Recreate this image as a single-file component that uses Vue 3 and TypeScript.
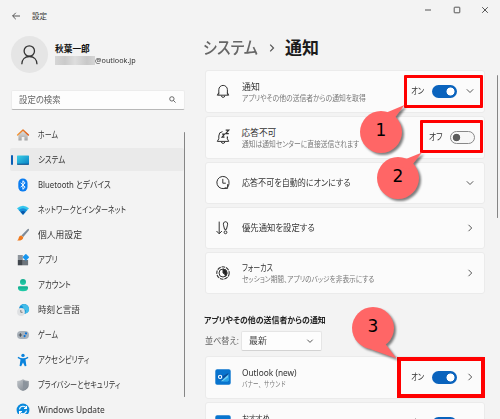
<script setup lang="ts">
interface NavItem { id: string; label: string; width: number }
interface Card {
  id: string
  title: string
  width: number
  sub?: string
  subWidth?: number
  toggle?: 'on' | 'off'
  toggleLabel?: string
  arrow?: 'down' | 'right'
}

const nav: NavItem[] = [
  { id: 'home', label: 'ホーム', width: 20 },
  { id: 'system', label: 'システム', width: 27.5 },
  { id: 'bluetooth', label: 'Bluetooth とデバイス', width: 73 },
  { id: 'network', label: 'ネットワークとインターネット', width: 88 },
  { id: 'personal', label: '個人用設定', width: 43.5 },
  { id: 'apps', label: 'アプリ', width: 19.5 },
  { id: 'account', label: 'アカウント', width: 32.5 },
  { id: 'time', label: '時刻と言語', width: 41.5 },
  { id: 'game', label: 'ゲーム', width: 20 },
  { id: 'access', label: 'アクセシビリティ', width: 51.5 },
  { id: 'privacy', label: 'プライバシーとセキュリティ', width: 82 },
  { id: 'update', label: 'Windows Update', width: 66.5 },
]

const cards: Card[] = [
  { id: 'bell', title: '通知', width: 17.5, sub: 'アプリやその他の送信者からの通知を取得', subWidth: 123.5, toggle: 'on', toggleLabel: 'オン', arrow: 'down' },
  { id: 'snooze', title: '応答不可', width: 35, sub: '通知は通知センターに直接送信されます', subWidth: 117, toggle: 'off', toggleLabel: 'オフ' },
  { id: 'clock', title: '応答不可を自動的にオンにする', width: 108.5, arrow: 'down' },
  { id: 'priority', title: '優先通知を設定する', width: 73, arrow: 'right' },
  { id: 'focus', title: 'フォーカス', width: 30.5, sub: 'セッション期間、アプリのバッジを非表示にする', subWidth: 132.5, arrow: 'right' },
]

const senders: Card[] = [
  { id: 'outlook', title: 'Outlook (new)', width: 54.5, sub: 'バナー、サウンド', subWidth: 44, toggle: 'on', toggleLabel: 'オン', arrow: 'right' },
  { id: 'suggest', title: 'おすすめ', width: 28, sub: 'バナー、サウンド', subWidth: 44, toggle: 'on', toggleLabel: 'オン', arrow: 'right' },
]

const callouts = [
  { n: 1, tail: 'M11 8 L44.5 -6 L31 12Z' },
  { n: 2, tail: 'M14 8 L45 -4.5 L32 12Z' },
  { n: 3, tail: 'M18 42 L44.5 51.5 L32 35Z' },
]

const vFit = {
  mounted(el: HTMLElement, binding: { value: number }) {
    el.style.transform = `scaleX(${binding.value / el.offsetWidth})`
  },
}
</script>

<template>
  <div class="window">
    <aside class="sidebar">
      <header class="titlebar">
        <svg class="back" viewBox="0 0 8 8"><path d="M8 4H.7M3.8.8.6 4l3.2 3.2" /></svg>
        <span v-fit="15" class="t app-name">設定</span>
      </header>

      <div class="profile">
        <div class="avatar">
          <svg viewBox="0 0 37 37"><circle cx="18.3" cy="15" r="5.2" /><path d="M10.8 28.2c0-4.7 3.1-7.7 7.6-7.7s7.6 3 7.6 7.7" /></svg>
        </div>
        <div class="who">
          <span v-fit="35" class="t name">秋葉一郎</span>
          <div class="mail"><i class="smudge"></i><span v-fit="40.5" class="t">@outlook.jp</span></div>
        </div>
      </div>

      <div class="search">
        <span v-fit="41.5" class="t">設定の検索</span>
        <svg viewBox="0 0 8 8"><circle cx="3.3" cy="3.3" r="2.5" /><path d="m5.2 5.2 2.3 2.3" /></svg>
      </div>

      <nav class="nav">
        <div v-for="n in nav" :key="n.id" class="row" :class="{ selected: n.id === 'system' }">
          <svg class="nav-icon" viewBox="0 0 12 12">
            <defs>
              <linearGradient id="gRoof" x1="0" x2="1"><stop stop-color="#f39a3b" /><stop offset="1" stop-color="#dc5a17" /></linearGradient>
              <linearGradient id="gWall" y1="0" x1="0" x2="0" y2="1"><stop stop-color="#e4e4e4" /><stop offset="1" stop-color="#a4a4a4" /></linearGradient>
              <linearGradient id="gScreen" x2="1" y2="1"><stop stop-color="#3ad0e6" /><stop offset="1" stop-color="#087fc4" /></linearGradient>
              <linearGradient id="gTeal" x1="0" x2="0" y2="1"><stop stop-color="#12a98c" /><stop offset="1" stop-color="#23cfaa" /></linearGradient>
              <linearGradient id="gShield" x2="1" y2="1"><stop stop-color="#c4c8cc" /><stop offset="1" stop-color="#747c86" /></linearGradient>
            </defs>
            <template v-if="n.id === 'home'">
              <path d="M1.4 5 6 1.2 10.7 5v6.5H7.4V8H4.7v3.5H1.4z" fill="url(#gWall)" />
              <path d="M.6 6 6 1l5.4 5" fill="none" stroke="url(#gRoof)" stroke-width="1.5" stroke-linecap="round" stroke-linejoin="round" />
            </template>
            <template v-else-if="n.id === 'system'">
              <rect y="1.5" width="12" height="9" rx=".6" fill="url(#gScreen)" />
              <path d="M0 9.8h12v.2q0 .7-.7.7H.7Q0 10.7 0 10z" fill="#0b4a86" />
            </template>
            <template v-else-if="n.id === 'bluetooth'">
              <rect x="1.3" y="-.5" width="9.2" height="13" rx="4.6" fill="#0a7cf0" />
              <path d="m3.6 3.7 4.5 4.5-2.2 2.1V1.700l2.200 2.100-4.500 4.500" fill="none" stroke="#fff" stroke-width=".95" />
            </template>
            <template v-else-if="n.id === 'network'">
              <path d="M0 4.300Q6-.9 12 4.300L6 10.700z" fill="#35c6ee" />
              <path d="M1.700 6.100Q6 2.200 10.300 6.100L6 10.700z" fill="#168dd8" />
              <path d="M3.600 8.100Q6 5.900 8.400 8.100L6 10.700z" fill="#0b55a8" />
            </template>
            <template v-else-if="n.id === 'personal'">
              <path d="M11.800-.1q.6.600 0 1.500L6.300 8 4.400 6.500 10.500.2q.700-.6 1.300-.3z" fill="#7f8b98" />
              <path d="M4.300 6.500 6.300 8.200Q6.200 11.800.2 11.600 1.600 10.300 1.800 8.500 2.300 6.500 4.300 6.500z" fill="#f07a1e" />
            </template>
            <template v-else-if="n.id === 'apps'">
              <path d="M.8 1h5v5h-5z" fill="#8d949b" /><path d="M.8 6h5v5.300h-5z" fill="#41474d" /><path d="M5.900 6h5.200v5.300H5.900z" fill="#6c747b" />
              <rect x="6.400" y=".8" width="4.900" height="4.900" rx=".7" fill="#1796ef" transform="rotate(45 8.850 3.250)" />
            </template>
            <template v-else-if="n.id === 'account'">
              <circle cx="6" cy="2.900" r="3" fill="url(#gTeal)" />
              <path d="M2.300 7.300h7.400q1.400 0 1.400 1.400 0 3.500-5.100 3.500T.9 8.700q0-1.400 1.400-1.400z" fill="url(#gTeal)" />
            </template>
            <template v-else-if="n.id === 'time'">
              <circle cx="7" cy="5" r="5" fill="#1693d6" /><path d="M4 1.500q3 1 2 3.500l3 1.500-1 3q5-1 4-5T7 0z" fill="#43bde9" />
              <circle cx="4" cy="8" r="3.900" fill="#dfe1e3" /><path d="M3.800 6v2.300h1.800" fill="none" stroke="#646a70" stroke-width=".8" />
            </template>
            <template v-else-if="n.id === 'game'">
              <rect y="2" width="12" height="8" rx="3.900" fill="#aab2ba" />
              <path d="M3.400 4.300v3.400M1.700 6h3.400" stroke="#4b535b" stroke-width="1.100" />
              <circle cx="9" cy="4.400" r="1.100" fill="#0a74da" /><circle cx="7.600" cy="7.100" r="1.100" fill="#0a74da" />
            </template>
            <template v-else-if="n.id === 'access'">
              <circle cx="6" cy="1.400" r="1.700" fill="#0a83dc" />
              <path d="M1.200 2.700Q6 6 10.800 2.700l.6 1.300-2.900 1.600.9 6.300-1.600.3L6 8.400 4.200 12.200l-1.600-.3.900-6.300L.6 4z" fill="#0a83dc" />
            </template>
            <template v-else-if="n.id === 'privacy'">
              <path d="M6 .2Q8.500 2 11.800 2v4q0 4-5.800 6Q.2 10 .2 6V2Q3.500 2 6 .2z" fill="url(#gShield)" />
              <path d="M6 1.500Q8.200 2.800 10.500 2.900V6q0 3.200-4.500 4.800z" fill="#8b939c" />
            </template>
            <template v-else>
              <circle cx="6" cy="6" r="6.400" fill="#0989dc" />
              <path d="M2.500 5.400A3.600 3.600 0 0 1 9.300 4.300M9.500 2v2.500H7M9.500 6.600A3.600 3.600 0 0 1 2.700 7.700M2.500 10V7.500H5" fill="none" stroke="#fff" stroke-width="1.050" />
            </template>
          </svg>
          <span v-fit="n.width" class="t">{{ n.label }}</span>
        </div>
      </nav>
      <i class="side-scroll"></i>
    </aside>

    <main class="main">
      <h1 class="crumbs">
        <span v-fit="55" class="t parent">システム</span>
        <svg viewBox="0 0 6 8"><path d="m1.200.7 3.300 3.300-3.300 3.300" /></svg>
        <span v-fit="34" class="t">通知</span>
      </h1>

      <template v-for="(group, g) in [cards, senders]" :key="g">
        <template v-if="g === 1">
          <h2 class="section"><span v-fit="122" class="t">アプリやその他の送信者からの通知</span></h2>
          <div class="sort">
            <span class="sort-label"><span v-fit="33.5" class="t">並べ替え:</span></span>
            <div class="select">
              <span v-fit="17.5" class="t">最新</span>
              <svg viewBox="0 0 8 8"><path d="m1.300 2.700 2.700 2.700 2.700-2.700" /></svg>
            </div>
          </div>
        </template>
        <div class="cards" :class="{ wide: g === 1 }">
          <section v-for="c in group" :key="c.id" class="card" :class="c.id">
            <svg class="card-icon" viewBox="0 0 16 16">
              <path v-if="c.id === 'bell'" d="M3.800 11.800V6.700a4.300 4.300 0 0 1 8.600 0v5.100M2.300 12.200h11.400l-1.300-2.500M2.300 12.200l1.500-2.500M6.400 12.700q.2 1.700 1.700 1.700t1.700-1.700" />
              <g v-else-if="c.id === 'snooze'">
                <path d="M7.500 2.600Q3.800 3 3.800 7v2.800l-1.500 2.600h11.400l-1.300-2.600M6.400 12.900q.2 1.500 1.700 1.500t1.700-1.500" />
                <path d="M10.700 1.100h3.100l-3.100 3.600h3.100M7.100 5.200h2.400L7.100 8.100h2.400M12.400 7.500v2.300" stroke-width="1.200" />
              </g>
              <g v-else-if="c.id === 'clock'"><path d="M11.500 12.800A6.100 6.100 0 1 1 14 8.700q0 2-1.300 3.600M7.800 4.200v4.300h3M12.600 9.500v4.200H9.200" transform="translate(0 -.3)" /></g>
              <g v-else-if="c.id === 'priority'">
                <path d="M4.200 1.600v12M1.500 11l2.700 2.800L6.900 11" />
                <path d="M10.500 1.700q-3 .4-1.800 4.200l.9 3.500h1.800l.9-3.500q1.200-3.800-1.800-4.200z" /><circle cx="10.500" cy="12.300" r="1.400" />
              </g>
              <g v-else-if="c.id === 'focus'">
                <circle cx="8" cy="8" r="6.200" stroke-dasharray="3.600 .9" stroke-width="1.100" /><circle cx="8" cy="8" r="4" /><path d="M8 4a4 4 0 0 1 2.500 7.100Q10 8.700 8 8z" fill="#222" />
              </g>
              <g v-else stroke="none">
                <rect x=".3" y=".3" width="15.400" height="15.400" rx="1.800" fill="#0874ce" />
                <path d="m6 9.600 7.400-4.900v6.800q0 .7-.7.700H6z" fill="#70d0f7" /><path d="m6 8.200 7.400-4.300v1.600L6 12z" fill="#074f9e" />
                <path d="M7.500 12.200 13.400 8v3.500q0 .7-.7.700z" fill="#28a6e9" />
                <rect x="2.300" y="5" width="5.800" height="5.800" rx=".8" fill="#086cc8" /><circle cx="5.100" cy="7.900" r="1.600" fill="none" stroke="#fff" stroke-width="1.100" />
              </g>
            </svg>
            <div class="copy">
              <span v-fit="c.width" class="t title">{{ c.title }}</span>
              <span v-if="c.sub" v-fit="c.subWidth" class="t sub">{{ c.sub }}</span>
            </div>
            <div v-if="c.toggle" class="control">
              <span v-fit="13.5" class="t">{{ c.toggleLabel }}</span>
              <i class="toggle" :class="c.toggle"></i>
            </div>
            <svg v-if="c.arrow" class="arrow" viewBox="0 0 8 8">
              <path :d="c.arrow === 'down' ? 'm.8 2.300 3.200 3.200 3.200-3.200' : 'M2.500.8 5.700 4 2.500 7.200'" />
            </svg>
          </section>
        </div>
      </template>
    </main>

    <div class="caption-buttons">
      <svg viewBox="0 0 6 6"><path d="M0 3h6" /></svg>
      <svg viewBox="0 0 6 6"><rect x=".2" y=".2" width="5.600" height="5.600" rx=".6" /></svg>
      <svg viewBox="0 0 6 6"><path d="m.2.2 5.600 5.600M5.800.2.2 5.800" /></svg>
    </div>
    <i class="main-scroll"></i>

    <i v-for="m in callouts" :key="`f${m.n}`" class="frame" :class="`frame-${m.n}`"></i>
    <div v-for="m in callouts" :key="m.n" class="callout" :class="`callout-${m.n}`">
      <svg viewBox="0 0 42 42"><circle cx="21" cy="21" r="21" /><path :d="m.tail" /></svg>
      <span>{{ m.n }}</span>
    </div>
  </div>
</template>

<style>
body { margin: 0; overflow: hidden; background: #f3f3f3; }
</style>

<style scoped>
.window {
  position: relative; display: flex; width: 500px; height: 419px; overflow: hidden;
  background: #f3f3f3; color: #333;
  font-family: "Noto Sans", "Noto Sans CJK JP", sans-serif; font-size: 8.7px; line-height: 12px;
}
.t { display: inline-block; flex: none; white-space: nowrap; transform-origin: 0 50%; font-feature-settings: "palt"; }
svg { display: block; flex: none; overflow: visible; fill: none; stroke: #444; stroke-width: .9; }
i { display: block; flex: none; }

.sidebar { position: relative; flex: none; width: 185px; }
.titlebar { display: flex; align-items: center; gap: 12.5px; height: 32px; padding-left: 11.5px; }
.back { width: 8px; height: 8px; }
.app-name { font-size: 7.5px; }
.profile { display: flex; align-items: center; gap: 7px; height: 44px; padding-left: 11px; }
.avatar { width: 37px; height: 37px; border-radius: 50%; background: #e5e5e5; }
.avatar svg { width: 37px; height: 37px; stroke: #333; stroke-width: 1.3; }
.who { display: flex; flex-direction: column; padding-top: 1px; }
.name { align-self: flex-start; color: #111; font-weight: 700; line-height: 11px; }
.mail { display: flex; align-items: center; height: 10px; font-size: 7.5px; line-height: 10px; }
.smudge { width: 40px; height: 9px; background: linear-gradient(90deg, #d6d6d6, #cacaca 25%, #dedede 50%, #c8c8c8 80%, #d5d5d5); filter: blur(.6px); }
.search {
  display: flex; align-items: center; justify-content: space-between; box-sizing: border-box;
  width: 174px; height: 20px; margin: 13.5px 0 0 10.5px; padding: 0 7.5px;
  border: 1px solid #ececec; border-bottom: 1px solid #b8b8b8; border-radius: 2px; background: #fdfdfd; color: #666;
}
.search svg { width: 7px; height: 7px; }
.nav { height: 291.5px; margin-top: 12.7px; overflow: hidden; }
.row { position: relative; display: flex; align-items: center; gap: 9px; height: 25px; padding-left: 17px; }
.row .t { position: relative; }
.nav-icon { position: relative; width: 12px; height: 12px; stroke: none; }
.selected::before { content: ""; position: absolute; inset: 1px 1px 1px 10px; border-radius: 2px; background: #eaeaea; }
.selected::after { content: ""; position: absolute; left: 11px; top: 7.5px; width: 2px; height: 10px; border-radius: 1px; background: #0a5eb5; }
.side-scroll { position: absolute; left: 183.7px; top: 132px; width: 1.3px; height: 265px; border-radius: 1px; background: #858585; }

.main { display: flex; flex-direction: column; flex: none; width: 280px; padding-left: 19.5px; }
.crumbs { display: flex; align-items: center; height: 24px; margin: 35.5px 0 10px -1.5px; font-size: 17px; line-height: 24px; font-weight: 600; color: #1b1b1b; }
.crumbs .parent { color: #666; font-weight: 500; }
.crumbs svg { position: absolute; left: 269px; width: 6px; height: 8px; stroke: #555; stroke-width: 1.2; }
.crumbs > .t:last-child { position: absolute; left: 285px; }
.cards { display: flex; flex-direction: column; gap: 2.5px; }
.card {
  display: flex; align-items: center; box-sizing: border-box; height: 42.5px; padding: 0 10px 0 9px;
  border: 1px solid #ebebeb; border-radius: 3px; background: #fbfbfb;
}
.bell, .snooze { height: 43.5px; }
.card-icon { width: 16px; height: 16px; stroke: #333; stroke-width: 1; }
.copy { display: flex; flex: 1; flex-direction: column; align-items: flex-start; width: 0; padding-top: 2px; margin-left: 11px; }
.title { line-height: 11px; }
.sub { font-size: 7.5px; line-height: 10px; color: #777; }
.wide .sub { font-feature-settings: normal; }
.control { display: flex; align-items: center; justify-content: space-between; width: 46px; margin-right: 8.5px; }
.toggle { box-sizing: border-box; width: 25px; height: 13px; border-radius: 7px; }
.on { background: radial-gradient(circle at 18.5px 6.5px, #fff 3.7px, #0a63bd 4.3px); }
.off { border: 1px solid #888; background: radial-gradient(circle at 5.5px 5.5px, #5b5b5b 3.4px, #f7f7f7 4.1px); }
.snooze .control { width: 46.5px; margin-right: -1.5px; }
.arrow { width: 8px; height: 8px; }
.section { height: 12px; margin: 20px 0 0 -.5px; font-size: 8.5px; line-height: 12px; font-weight: 600; color: #222; }
.sort { display: flex; align-items: center; height: 20px; margin-top: 4.5px; color: #666; }
.sort-label { flex: none; width: 36px; }
.select {
  display: flex; align-items: center; justify-content: space-between; box-sizing: border-box;
  width: 81px; height: 20px; padding: 0 7px; border: 1px solid #e5e5e5; border-bottom-color: #d3d3d3;
  border-radius: 2px; background: #fdfdfd; color: #444;
}
.select svg { width: 8px; height: 8px; }
.wide { margin-top: 5px; }
.wide .card { height: 43.5px; }

.caption-buttons { position: absolute; left: 425px; top: 7px; display: flex; gap: 22.5px; }
.caption-buttons svg { width: 6px; height: 6px; }
.main-scroll { position: absolute; left: 497px; top: 75px; width: 1.4px; height: 143px; border-radius: 1px; background: #858585; }

.frame { position: absolute; box-sizing: border-box; border: 3px solid #f00; border-radius: 1px; }
.frame-1 { left: 404px; top: 75px; width: 79px; height: 33px; }
.frame-2 { left: 420px; top: 120px; width: 63px; height: 33px; }
.frame-3 { left: 397px; top: 357px; width: 88px; height: 41px; border-width: 4px; border-radius: 0; }
.callout { position: absolute; display: flex; align-items: center; justify-content: center; width: 42px; height: 42px; }
.callout svg { position: absolute; width: 42px; height: 42px; fill: #ff6666; stroke: none; filter: drop-shadow(2.5px 2.5px 1.2px rgba(0, 0, 0, .5)); }
.callout span { position: relative; top: -2px; color: #000; font: 17px/20px "DejaVu Sans", sans-serif; }
.callout-1 { left: 360px; top: 111px; }
.callout-2 { left: 377px; top: 157px; }
.callout-3 { left: 352px; top: 307px; }
</style>
